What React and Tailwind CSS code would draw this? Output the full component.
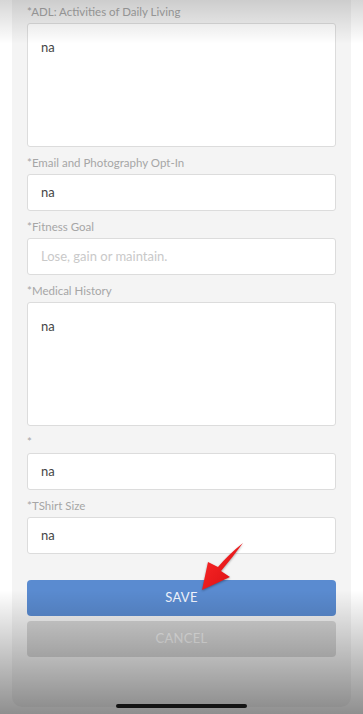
import React from 'react';

// One labelled form field: single line input or multi-line box
const Field = ({ label, value, placeholder, tall }) => (
  <div className="mt-[8px] first:mt-0">
    <div className="h-[16px] text-[11.5px] leading-[16px] text-[#a6a6a6]">{label}</div>
    <div
      className={`mt-[3px] rounded-[3px] border border-[#dcdcdc] bg-white px-[13px] text-[13px] ${
        tall ? 'h-[124px] pt-[13px] leading-[20px]' : 'flex h-[37px] items-center'
      }`}
    >
      {value ? (
        <span className="text-[#454545]">{value}</span>
      ) : (
        <span className="text-[#c9c9c9]">{placeholder}</span>
      )}
    </div>
  </div>
);

export default function App() {
  return (
    <div
      className="relative h-[714px] w-[363px] overflow-hidden bg-white"
      style={{ fontFamily: 'Lato, "Open Sans", sans-serif' }}
    >
      {/* form panel */}
      <div className="mx-[12px] h-[707px] rounded-b-[10px] bg-[#f4f4f4] px-[15px] pt-[4px]">
        <Field label="*ADL: Activities of Daily Living" value="na" tall />
        <Field label="*Email and Photography Opt-In" value="na" />
        <Field label="*Fitness Goal" placeholder="Lose, gain or maintain." />
        <Field label="*Medical History" value="na" tall />
        <Field label="*" value="na" />
        <Field label="*TShirt Size" value="na" />

        <div className="mt-[26px] flex flex-col gap-[5px]">
          <button className="h-[36px] rounded-[4px] bg-[#5a8bd0] text-[13px] tracking-wide text-[#f2f6ff]">
            SAVE
          </button>
          <button className="h-[36px] rounded-[4px] bg-[#d4d4d4] text-[13px] tracking-wide text-[#efefef]">
            CANCEL
          </button>
        </div>
      </div>

      {/* top and bottom screen shading */}
      <div className="pointer-events-none absolute inset-x-0 top-0 h-[44px] bg-gradient-to-b from-[rgba(0,0,0,0.16)] to-transparent" />
      <div className="pointer-events-none absolute inset-x-0 bottom-0 h-[124px] bg-gradient-to-b from-transparent to-[rgba(0,0,0,0.44)]" />

      {/* red annotation arrow */}
      <svg className="pointer-events-none absolute left-0 top-0" width="363" height="714" viewBox="0 0 363 714">
        <defs>
          <linearGradient id="arrowFill" x1="0" y1="0" x2="1" y2="1">
            <stop offset="0" stopColor="#ff2a2a" />
            <stop offset="1" stopColor="#d60d10" />
          </linearGradient>
        </defs>
        <path
          d="M243 543 Q229 554 218 567 L208 562 L202 590 L230 577 L221 571 Q232 558 243 543 Z"
          fill="url(#arrowFill)"
          style={{ filter: 'drop-shadow(0 1px 1px rgba(0,0,0,0.35))' }}
        />
      </svg>

      {/* home indicator */}
      <div className="absolute bottom-[6px] left-[116px] h-[4px] w-[131px] rounded-full bg-[#141414]" />
    </div>
  );
}
